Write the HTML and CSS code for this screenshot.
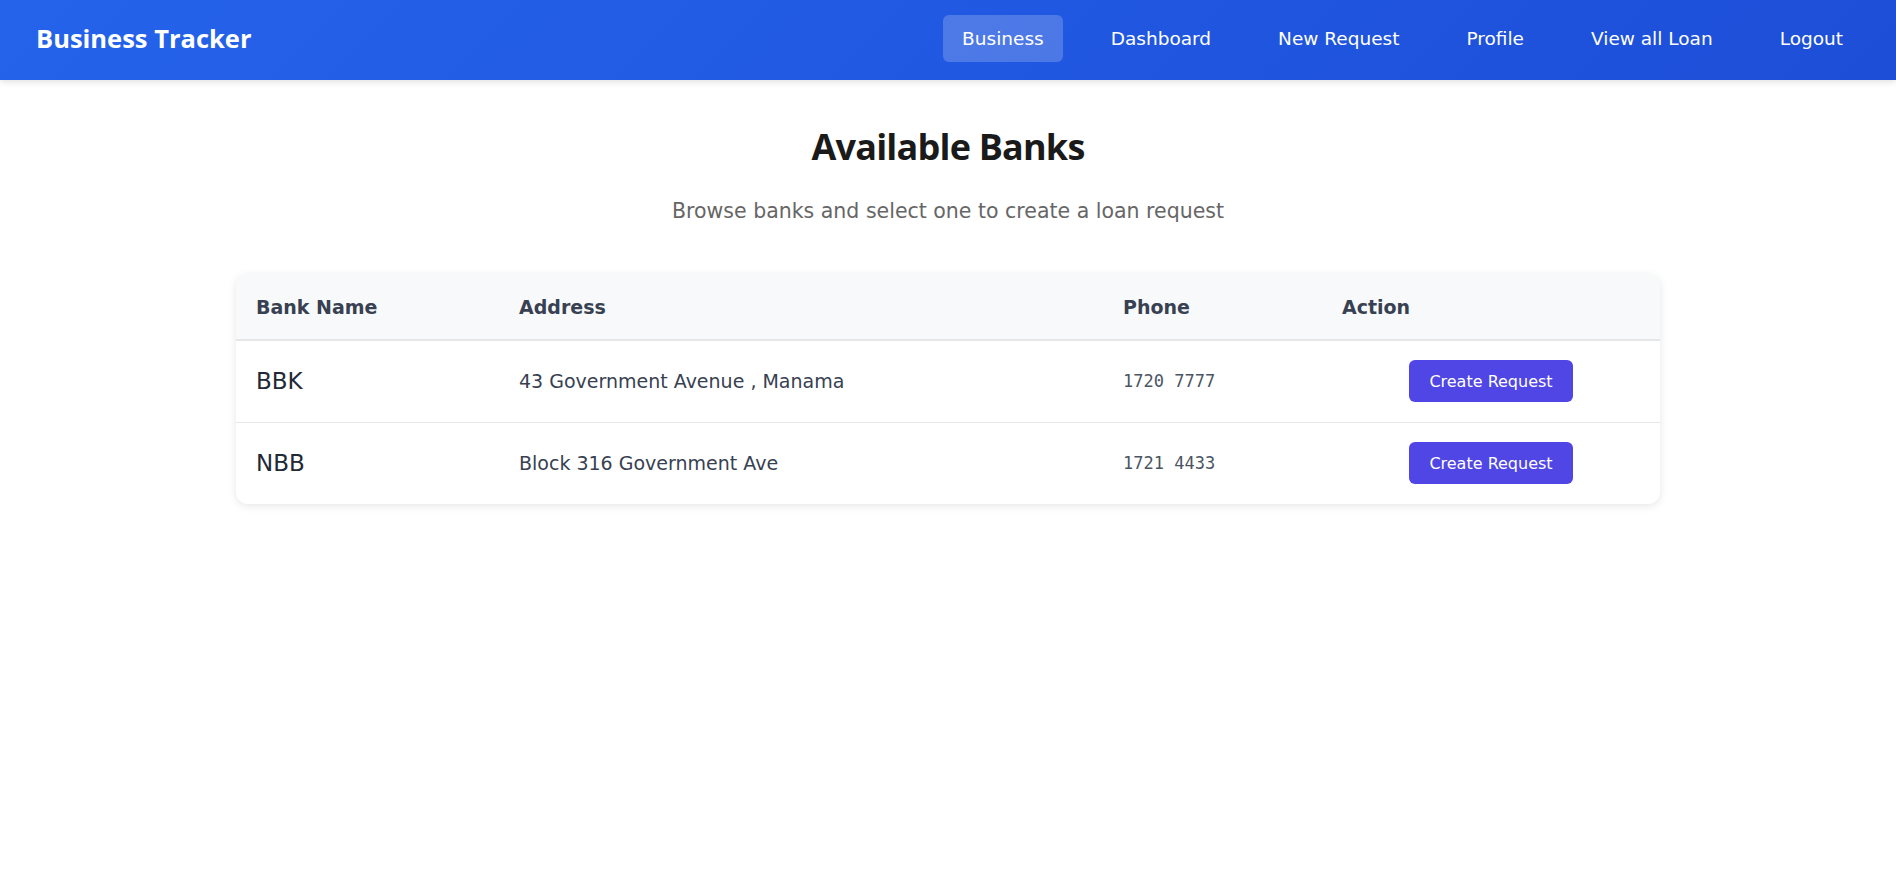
FILE: index.html
```html
<!DOCTYPE html>
<html lang="en">
<head>
<meta charset="utf-8">
<title>Business Tracker</title>
<link rel="stylesheet" href="styles.css">
</head>
<body>
<header class="navbar">
  <div class="brand">Business Tracker</div>
  <nav class="nav">
    <a class="nav-link active" href="#">Business</a>
    <a class="nav-link" href="#">Dashboard</a>
    <a class="nav-link" href="#">New Request</a>
    <a class="nav-link" href="#">Profile</a>
    <a class="nav-link" href="#">View all Loan</a>
    <a class="nav-link" href="#">Logout</a>
  </nav>
</header>
<main class="main">
  <h1 class="title">Available Banks</h1>
  <p class="subtitle">Browse banks and select one to create a loan request</p>
  <div class="card">
    <table class="banks">
      <thead>
        <tr>
          <th class="c-name">Bank Name</th>
          <th class="c-addr">Address</th>
          <th class="c-phone">Phone</th>
          <th class="c-action">Action</th>
        </tr>
      </thead>
      <tbody>
        <tr>
          <td class="name">BBK</td>
          <td class="addr">43 Government Avenue , Manama</td>
          <td class="phone">1720 7777</td>
          <td class="action"><button class="btn">Create Request</button></td>
        </tr>
        <tr>
          <td class="name">NBB</td>
          <td class="addr">Block 316 Government Ave</td>
          <td class="phone">1721 4433</td>
          <td class="action"><button class="btn">Create Request</button></td>
        </tr>
      </tbody>
    </table>
  </div>
</main>
</body>
</html>
```
FILE: styles.css
```css
* { box-sizing: border-box; }
html, body { margin: 0; padding: 0; background: #ffffff; }
body {
  font-family: "DejaVu Sans", Verdana, sans-serif;
  color: #1f2937;
}
.navbar {
  height: 80px;
  display: flex;
  align-items: center;
  justify-content: space-between;
  padding: 0 34px 4px 36px;
  background: linear-gradient(135deg, #2563eb 0%, #1d4ed8 100%);
  box-shadow: 0 2px 6px rgba(0,0,0,0.12);
}
.brand {
  font-family: "Open Sans", "Noto Sans", sans-serif;
  font-weight: 700;
  font-size: 25.5px;
  color: #ffffff;
}
.nav { display: flex; align-items: center; gap: 29px; }
.nav-link {
  color: #ffffff;
  text-decoration: none;
  font-size: 18.5px;
  padding: 12px 19px;
  line-height: 23px;
  border-radius: 6px;
}
.nav-link.active { background: rgba(255,255,255,0.2); }
.main { padding: 45px 0 40px; display: flex; flex-direction: column; align-items: center; }
.title {
  margin: 0;
  font-family: "Open Sans", "Noto Sans", sans-serif;
  font-weight: 700;
  font-size: 36px;
  line-height: 44px;
  color: #1a1a1a;
  letter-spacing: -0.8px;
}
.subtitle {
  margin: 30px 0 0;
  font-size: 20.5px;
  color: #666666;
}
.card {
  width: 1424px;
  margin-top: 51px;
  background: #ffffff;
  border-radius: 12px;
  box-shadow: 0 2px 8px rgba(0,0,0,0.1);
  overflow: hidden;
}
.banks { width: 100%; border-collapse: collapse; table-layout: fixed; }
.banks th {
  text-align: left;
  background: #f8f9fa;
  height: 66px;
  padding: 0 20px;
  font-weight: 700;
  font-size: 19px;
  color: #374151;
  border-bottom: 2px solid #e5e7eb;
}
.c-name { width: 263px; }
.c-addr { width: 604px; }
.c-phone { width: 219px; }
.c-action { width: 338px; }
.banks td {
  height: 82px;
  padding: 0 20px;
  border-bottom: 1px solid #e5e7eb;
  vertical-align: middle;
}
.banks tbody tr:last-child td { border-bottom: none; }
.name { font-size: 23px; color: #1f2937; }
.addr { font-size: 19px; color: #374151; }
.phone { font-family: "DejaVu Sans Mono", monospace; font-size: 17px; color: #4b5563; }
.action { text-align: center; }
.btn {
  font-family: inherit;
  font-size: 16px;
  color: #ffffff;
  background: #4f46e5;
  border: none;
  border-radius: 6px;
  width: 164px;
  height: 42px;
  cursor: pointer;
}
```
